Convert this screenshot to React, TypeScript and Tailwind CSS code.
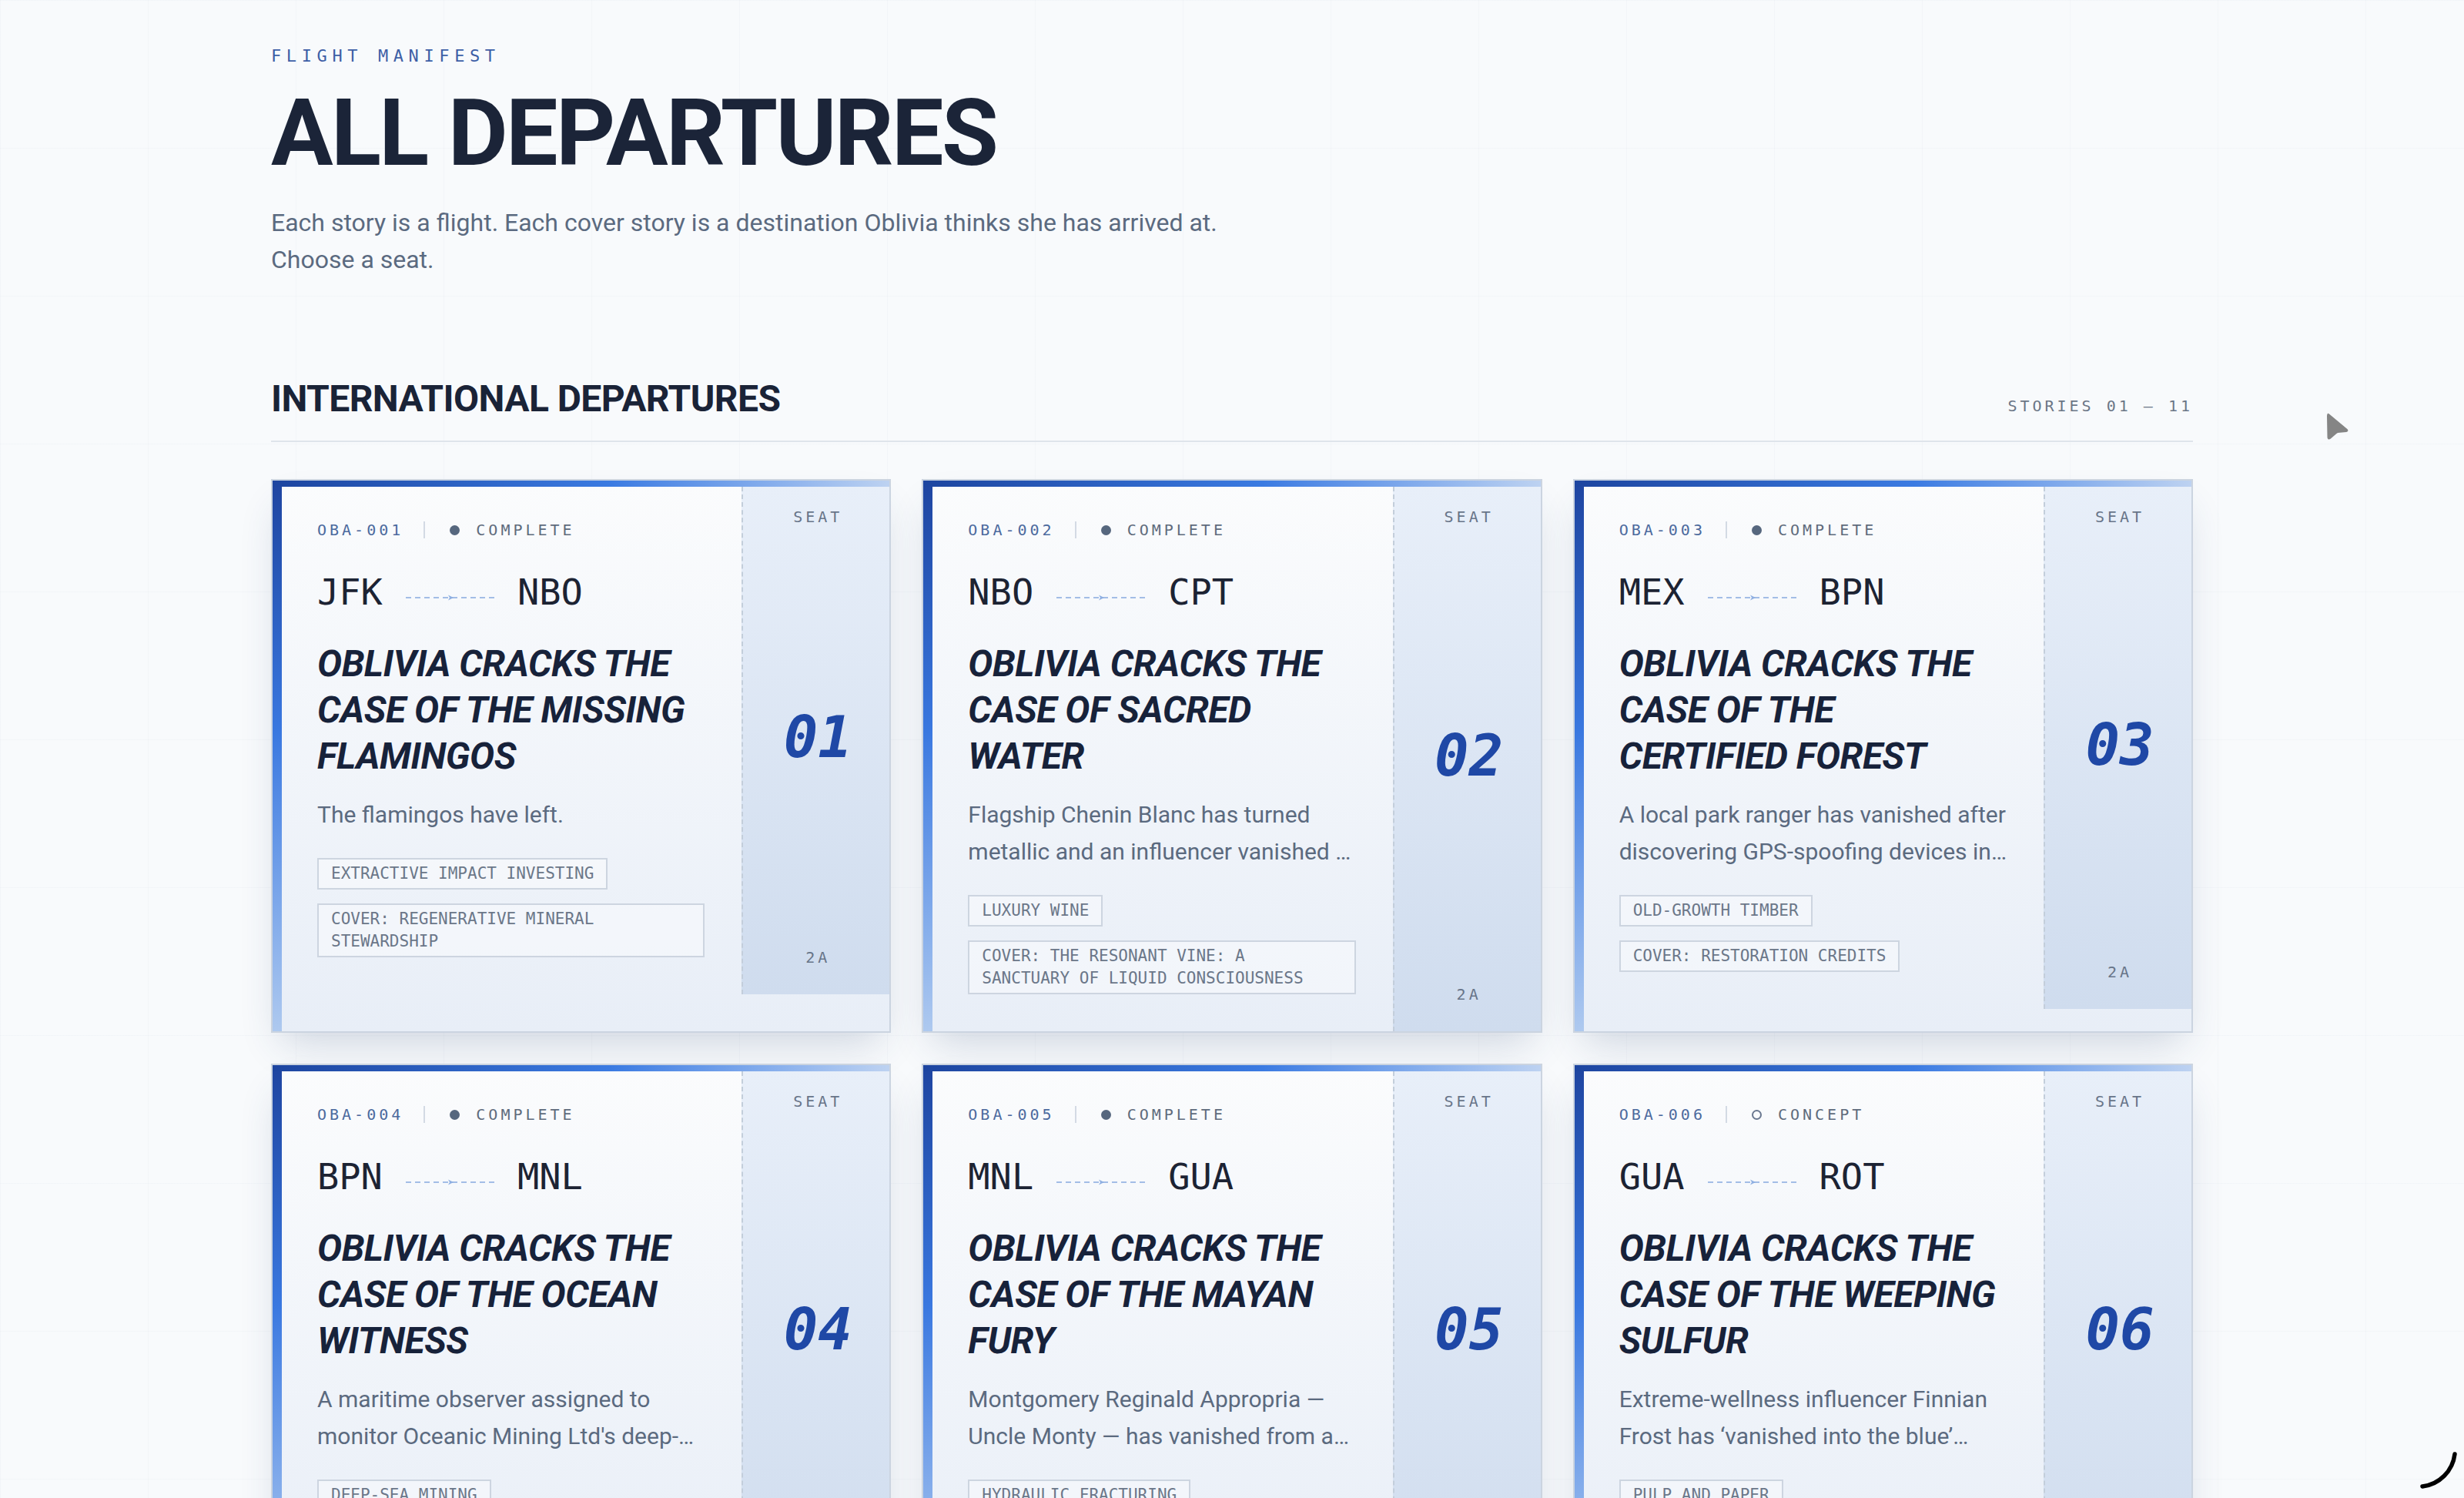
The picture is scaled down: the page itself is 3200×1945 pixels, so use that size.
import React from "react";

type Flight = {
  id: string;
  status: "COMPLETE" | "CONCEPT";
  from: string;
  to: string;
  title: string;
  desc: string;
  tags: string[];
  seat: string;
};

const flights: Flight[] = [
  {
    id: "OBA-001",
    status: "COMPLETE",
    from: "JFK",
    to: "NBO",
    title: "OBLIVIA CRACKS THE CASE OF THE MISSING FLAMINGOS",
    desc: "The flamingos have left.",
    tags: ["EXTRACTIVE IMPACT INVESTING", "COVER: REGENERATIVE MINERAL STEWARDSHIP"],
    seat: "01",
  },
  {
    id: "OBA-002",
    status: "COMPLETE",
    from: "NBO",
    to: "CPT",
    title: "OBLIVIA CRACKS THE CASE OF SACRED WATER",
    desc: "Flagship Chenin Blanc has turned metallic and an influencer vanished in the middle of a sound-bath tasting at the estate.",
    tags: ["LUXURY WINE", "COVER: THE RESONANT VINE: A SANCTUARY OF LIQUID CONSCIOUSNESS"],
    seat: "02",
  },
  {
    id: "OBA-003",
    status: "COMPLETE",
    from: "MEX",
    to: "BPN",
    title: "OBLIVIA CRACKS THE CASE OF THE CERTIFIED FOREST",
    desc: "A local park ranger has vanished after discovering GPS-spoofing devices in the protected canopy.",
    tags: ["OLD-GROWTH TIMBER", "COVER: RESTORATION CREDITS"],
    seat: "03",
  },
  {
    id: "OBA-004",
    status: "COMPLETE",
    from: "BPN",
    to: "MNL",
    title: "OBLIVIA CRACKS THE CASE OF THE OCEAN WITNESS",
    desc: "A maritime observer assigned to monitor Oceanic Mining Ltd's deep-sea operations has disappeared overboard.",
    tags: ["DEEP-SEA MINING", "COVER: BLUE ECONOMY STEWARDSHIP"],
    seat: "04",
  },
  {
    id: "OBA-005",
    status: "COMPLETE",
    from: "MNL",
    to: "GUA",
    title: "OBLIVIA CRACKS THE CASE OF THE MAYAN FURY",
    desc: "Montgomery Reginald Appropria — Uncle Monty — has vanished from a sacred site in the highlands.",
    tags: ["HYDRAULIC FRACTURING", "COVER: ANCESTRAL ENERGY PARTNERSHIP"],
    seat: "05",
  },
  {
    id: "OBA-006",
    status: "CONCEPT",
    from: "GUA",
    to: "ROT",
    title: "OBLIVIA CRACKS THE CASE OF THE WEEPING SULFUR",
    desc: "Extreme-wellness influencer Finnian Frost has ‘vanished into the blue’ during a geothermal immersion retreat.",
    tags: ["PULP AND PAPER", "COVER: GEOTHERMAL RENEWAL"],
    seat: "06",
  },
];

function RouteLine() {
  return (
    <svg width="115" height="10" viewBox="0 0 115 10" className="mt-[14px] shrink-0">
      <line x1="0" y1="5" x2="115" y2="5" stroke="#a3bde6" strokeWidth="2" strokeDasharray="7 5" />
      <path d="M55 1.5 L62 5 L55 8.5 L57 5 Z" fill="#8fb0e2" />
    </svg>
  );
}

function Card({ f }: { f: Flight }) {
  return (
    <article className="flex flex-col border-2 border-[#cbd4e0] bg-linear-to-b from-[#fbfcfd] to-[#e8eef7] shadow-[0_26px_50px_-14px_rgba(40,64,110,0.20)]">
      <div className="h-[8px] bg-linear-to-r from-[#1d45a0] via-[#3b7be2] via-55% to-[#bdd2f1]" />
      <div className="flex flex-1">
        <div className="w-[12px] shrink-0 bg-linear-to-b from-[#1f46a2] via-[#3a78e0] via-45% to-[#aec9ef]" />
        <div className="min-w-0 flex-1">
          <div className="flex">
            <div className="min-w-0 flex-1 pl-[46px] pr-[48px] pt-[40px] pb-[48px]">
              <div className="flex items-center font-[family-name:'DejaVu_Sans_Mono',monospace] text-[20px] leading-[32px] tracking-[0.2em]">
                <span className="text-[#4c6a9e]">{f.id}</span>
                <span className="ml-[26px] h-[22px] w-[2px] bg-[#d3dae4]" />
                <span
                  className={
                    f.status === "COMPLETE"
                      ? "ml-[32px] h-[13px] w-[13px] rounded-full bg-[#56677e]"
                      : "ml-[32px] h-[13px] w-[13px] rounded-full border-2 border-[#6a7890]"
                  }
                />
                <span className="ml-[21px] text-[#5f6b7c]">{f.status}</span>
              </div>

              <div className="mt-[37px] flex items-center gap-[30px] font-[family-name:'DejaVu_Sans_Mono',monospace] text-[47px] leading-[56px] text-[#1c2333]">
                <span>{f.from}</span>
                <RouteLine />
                <span>{f.to}</span>
              </div>

              <h3 className="mt-[35px] text-[48px] font-bold italic leading-[60px] tracking-[-0.01em] text-[#17223a]">
                {f.title}
              </h3>

              <p className="mt-[22px] line-clamp-2 text-[30px] leading-[48px] text-[#5b6a7f]">{f.desc}</p>

              <div className="mt-[32px] flex flex-col items-start gap-[18px]">
                {f.tags.map((t) => (
                  <span
                    key={t}
                    className="border-2 border-[#cdd5e0] bg-white/40 px-[16px] py-[4px] font-[family-name:'DejaVu_Sans_Mono',monospace] text-[21px] leading-[29px] text-[#6b7789]"
                  >
                    {t}
                  </span>
                ))}
              </div>
            </div>

            <div className="flex w-[192px] shrink-0 flex-col items-center justify-between border-l-2 border-dashed border-[#c3cedb] bg-linear-to-b from-[#e8eff9] to-[#cfdcee] pt-[25px] pb-[34px]">
              <span className="pl-[0.2em] font-[family-name:'DejaVu_Sans_Mono',monospace] text-[20px] leading-[28px] tracking-[0.2em] text-[#687589]">
                SEAT
              </span>
              <span className="pl-[4px] font-[family-name:'DejaVu_Sans_Mono',monospace] text-[74px] font-bold italic leading-[80px] text-[#1f48a6]">
                {f.seat}
              </span>
              <span className="pl-[0.2em] font-[family-name:'DejaVu_Sans_Mono',monospace] text-[20px] leading-[28px] tracking-[0.2em] text-[#687589]">
                2A
              </span>
            </div>
          </div>
        </div>
      </div>
    </article>
  );
}

export default function App() {
  return (
    <div className="relative h-[1945px] overflow-hidden bg-[#f8fafc] bg-[linear-gradient(to_right,rgba(148,163,184,0.05)_1px,transparent_1px),linear-gradient(to_bottom,rgba(148,163,184,0.05)_1px,transparent_1px)] bg-[size:192px_192px] font-[family-name:Roboto,sans-serif]">
      <div className="mx-auto max-w-[2496px] pt-[57px]">
        <header>
          <p className="font-[family-name:'DejaVu_Sans_Mono',monospace] text-[22px] leading-[32px] tracking-[0.3em] text-[#3d5fa6]">
            FLIGHT MANIFEST
          </p>
          <h1 className="mt-[24px] text-[120px] font-bold leading-[120px] tracking-[-0.022em] text-[#1b2438]">
            ALL DEPARTURES
          </h1>
          <p className="mt-[32px] max-w-[1300px] text-[32px] leading-[48px] text-[#5b6a80]">
            Each story is a flight. Each cover story is a destination Oblivia thinks she has arrived at. Choose a seat.
          </p>
        </header>

        <section className="mt-[129px]">
          <div className="flex items-baseline justify-between border-b-2 border-[#dfe4eb] pb-[26px]">
            <h2 className="text-[48px] font-bold leading-[56px] tracking-[-0.012em] text-[#1a2337]">
              INTERNATIONAL DEPARTURES
            </h2>
            <span className="font-[family-name:'DejaVu_Sans_Mono',monospace] text-[20px] tracking-[0.2em] text-[#6b7686]">
              STORIES 01 — 11
            </span>
          </div>

          <div className="mt-[48px] grid grid-cols-3 gap-[40px]">
            {flights.map((f) => (
              <Card key={f.id} f={f} />
            ))}
          </div>
        </section>
      </div>

      <svg className="absolute left-[3019px] top-[534px]" width="34" height="38" viewBox="0 0 34 38">
        <path
          d="M5 4 L29 24 Q30 25.5 28 26 L17 27 Q15.5 27.3 14.5 28.5 L7 35 Q5 36.5 4.5 34 L4 6 Q4.2 3.2 5 4 Z"
          fill="#858585"
          stroke="#858585"
          strokeWidth="2"
          strokeLinejoin="round"
        />
      </svg>

      <svg className="absolute left-[3136px] top-[1880px]" width="60" height="60" viewBox="0 0 60 60">
        <path d="M52 8 A 48 48 0 0 1 10 50" fill="none" stroke="#000" strokeWidth="5.5" strokeLinecap="round" />
      </svg>
    </div>
  );
}
